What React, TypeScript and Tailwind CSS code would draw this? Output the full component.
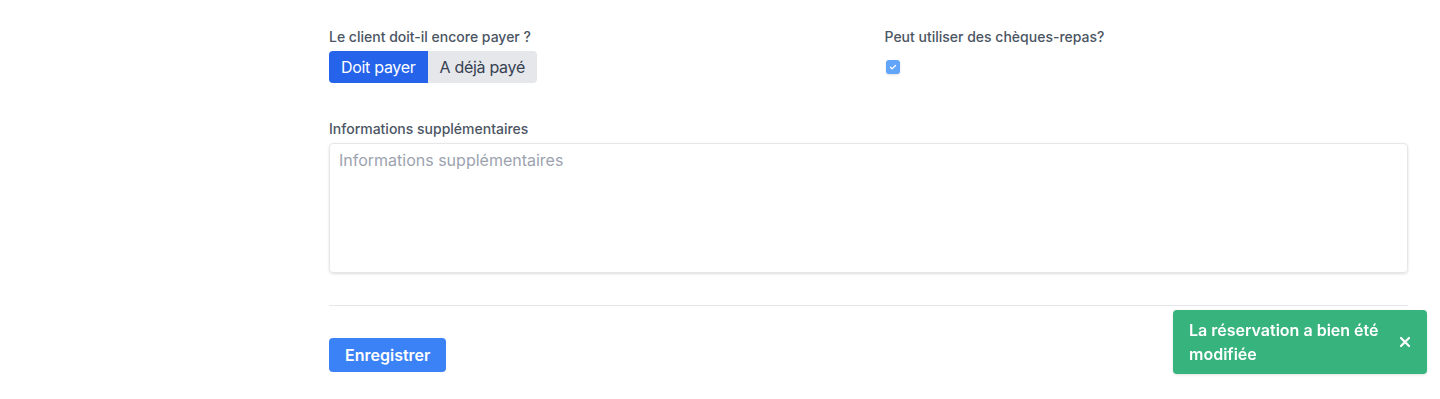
import React, { useState } from 'react';

export default function App() {
  const [mustPay, setMustPay] = useState(true);
  const [meals, setMeals] = useState(true);
  const [toast, setToast] = useState(true);

  return (
    <div className="min-h-[399px] bg-white font-['Inter',sans-serif] text-gray-800">
      <div className="ml-[329px] w-[1079px] pt-[27px]">
        <div className="grid grid-cols-2 gap-8">
          <div>
            <label className="block text-sm font-medium text-[#4b5563]">Le client doit-il encore payer ?</label>
            <div className="mt-1 flex tracking-[-0.3px]">
              <button
                onClick={() => setMustPay(true)}
                className={`rounded-l px-3 py-1 text-base ${mustPay ? 'bg-[#2563eb] text-white' : 'bg-[#e5e7eb] text-[#374151]'}`}
              >
                Doit payer
              </button>
              <button
                onClick={() => setMustPay(false)}
                className={`rounded-r px-3 py-1 text-base ${!mustPay ? 'bg-[#2563eb] text-white' : 'bg-[#e5e7eb] text-[#374151]'}`}
              >
                A déjà payé
              </button>
            </div>
          </div>
          <div>
            <label className="block text-sm font-medium text-[#4b5563]">Peut utiliser des chèques-repas?</label>
            <div className="mt-1 flex h-8 items-center pl-px">
              <button
                onClick={() => setMeals(!meals)}
                className={`flex h-[14px] w-[14px] items-center justify-center rounded-[3px] shadow-sm ${meals ? 'bg-[#60a5fa]' : 'border border-gray-300 bg-white'}`}
              >
                {meals && (
                  <svg viewBox="0 0 16 16" className="h-[10px] w-[10px]" fill="none" stroke="white" strokeWidth="2.2" strokeLinecap="round" strokeLinejoin="round">
                    <path d="M4 8.5l2.5 2.5L12 5.5" />
                  </svg>
                )}
              </button>
            </div>
          </div>
        </div>

        <div className="mt-9">
          <label className="block text-sm font-medium text-[#4b5563]">Informations supplémentaires</label>
          <textarea
            placeholder="Informations supplémentaires"
            className="mt-1 block h-[130px] w-full resize-none rounded border border-[#e5e7eb] px-[9px] py-1 text-base text-[#374151] shadow-sm outline-none placeholder:text-[#9ca3af]"
          />
        </div>

        <hr className="mt-8 border-[#e5e7eb]" />

        <button className="mt-8 rounded bg-[#3b82f6] px-4 py-[5px] text-base font-semibold text-white">
          Enregistrer
        </button>
      </div>

      {toast && (
        <div className="fixed bottom-[25px] right-[13px] flex w-[254px] items-center justify-between rounded bg-[#37b37e] py-2 pl-4 pr-4 text-white shadow">
          <div className="text-base font-semibold leading-6">
            La réservation a bien été
            <br />
            modifiée
          </div>
          <button onClick={() => setToast(false)} className="text-white">
            <svg viewBox="0 0 12 12" className="h-3 w-3" fill="none" stroke="white" strokeWidth="2.2" strokeLinecap="round">
              <path d="M2 2l8 8M10 2l-8 8" />
            </svg>
          </button>
        </div>
      )}
    </div>
  );
}
